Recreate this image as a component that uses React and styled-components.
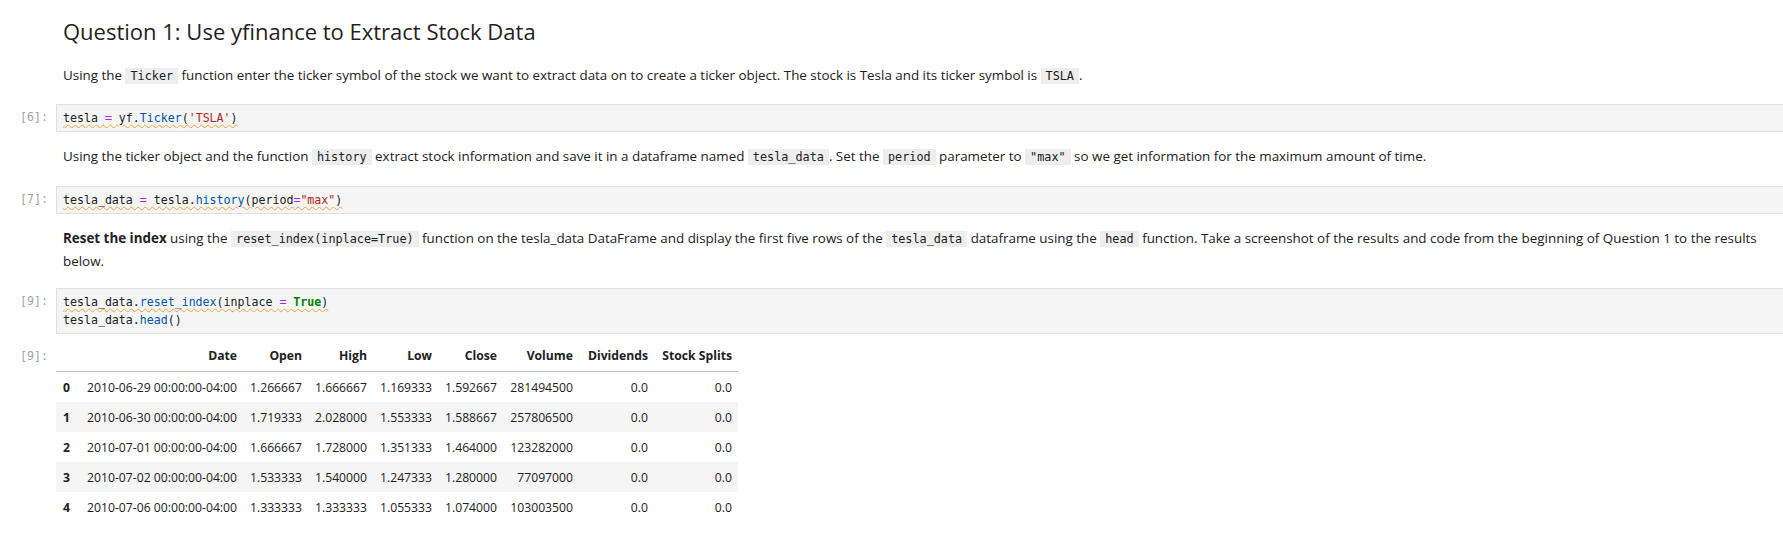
import styled, { createGlobalStyle } from "styled-components";

const GlobalStyle = createGlobalStyle`
  html, body {
    margin: 0;
    padding: 0;
    background: #ffffff;
    overflow: hidden;
  }
  body {
    font-family: "Open Sans", "Noto Sans", sans-serif;
    color: #212121;
  }
`

const Notebook = styled.div`
  display: flex;
  flex-direction: column;
  width: 1783px;
  padding-top: 16px;
`
const Row = styled.div`
  display: flex;
  flex-direction: row;
  align-items: flex-start;
  margin-top: ${(props) => props.gap || 0}px;
`
const Prompt = styled.div`
  width: 56px;
  flex: none;
  box-sizing: border-box;
  padding-right: 8px;
  padding-top: ${(props) => props.top || 5}px;
  text-align: right;
  font-family: "DejaVu Sans Mono", monospace;
  font-size: 11.6px;
  line-height: 17px;
  color: #a3a3a3;
`
const Markdown = styled.div`
  flex: 1;
  padding-left: 7px;
  font-size: 13.4px;
  line-height: 21.5px;
  color: #212121;
`
const Title = styled.h1`
  margin: 0;
  font-size: 22px;
  font-weight: 400;
  line-height: 30px;
  color: #1f1f1f;
`
const Para = styled.p`
  margin: 0;
`
const Inline = styled.code`
  font-family: "DejaVu Sans Mono", monospace;
  font-size: 11.8px;
  background: #eeeeee;
  padding: 1px 5px;
  color: #212121;
`
const CodeBox = styled.div`
  flex: 1;
  margin-right: -2px;
  background: #f5f5f5;
  border: 1px solid #e0e0e0;
  padding: 5px 6px 4px;
  font-family: "DejaVu Sans Mono", monospace;
  font-size: 11.6px;
  line-height: 17.5px;
  color: #212121;
  white-space: pre;
`
const Line = styled.div`
  span.u {
    text-decoration: underline wavy #f2a33a;
    text-decoration-thickness: 1px;
    text-underline-offset: 2px;
  }
`
const Op = styled.span`
  color: #aa22ff;
`
const Attr = styled.span`
  color: #0055aa;
`
const Str = styled.span`
  color: #ba2121;
`
const Kw = styled.span`
  color: #008000;
  font-weight: bold;
`
const Table = styled.table`
  border-collapse: collapse;
  table-layout: fixed;
  width: 682px;
  font-size: 12.2px;
  line-height: 14px;
  color: #212121;
`
const Th = styled.th`
  text-align: right;
  font-weight: 700;
  padding: 6px 6px 8px;
  white-space: nowrap;
  border-bottom: 1px solid #bdbdbd;
`
const Tr = styled.tr`
  background: ${(props) => (props.odd ? "#f5f5f5" : "transparent")};
`
const IndexCell = styled.th`
  text-align: left;
  font-weight: 700;
  padding: 9px 0 7px 7px;
`
const Td = styled.td`
  text-align: right;
  padding: 9px 6px 7px;
  white-space: nowrap;
`

const columns = ["Date", "Open", "High", "Low", "Close", "Volume", "Dividends", "Stock Splits"];
const widths = [21, 166, 65, 65, 65, 65, 76, 75, 84];

const rows = [
  ["2010-06-29 00:00:00-04:00", "1.266667", "1.666667", "1.169333", "1.592667", "281494500", "0.0", "0.0"],
  ["2010-06-30 00:00:00-04:00", "1.719333", "2.028000", "1.553333", "1.588667", "257806500", "0.0", "0.0"],
  ["2010-07-01 00:00:00-04:00", "1.666667", "1.728000", "1.351333", "1.464000", "123282000", "0.0", "0.0"],
  ["2010-07-02 00:00:00-04:00", "1.533333", "1.540000", "1.247333", "1.280000", "77097000", "0.0", "0.0"],
  ["2010-07-06 00:00:00-04:00", "1.333333", "1.333333", "1.055333", "1.074000", "103003500", "0.0", "0.0"],
];

const App = () => {
  return (
    <>
      <GlobalStyle />
      <Notebook>
        <Row>
          <Prompt />
          <Markdown>
            <Title>Question 1: Use yfinance to Extract Stock Data</Title>
          </Markdown>
        </Row>
        <Row gap={19}>
          <Prompt />
          <Markdown>
            <Para>
              Using the <Inline>Ticker</Inline> function enter the ticker symbol of the stock we want to extract data on to create a ticker object. The stock is Tesla and its ticker symbol is <Inline>TSLA</Inline>.
            </Para>
          </Markdown>
        </Row>

        <Row gap={16}>
          <Prompt>[6]:</Prompt>
          <CodeBox>
            <Line>
              <span className="u">tesla <Op>=</Op> yf.<Attr>Ticker</Attr>(<Str>'TSLA'</Str>)</span>
            </Line>
          </CodeBox>
        </Row>

        <Row gap={14}>
          <Prompt />
          <Markdown>
            <Para>
              Using the ticker object and the function <Inline>history</Inline> extract stock information and save it in a dataframe named <Inline>tesla_data</Inline>. Set the <Inline>period</Inline> parameter to <Inline>"max"</Inline> so we get information for the maximum amount of time.
            </Para>
          </Markdown>
        </Row>

        <Row gap={17}>
          <Prompt>[7]:</Prompt>
          <CodeBox>
            <Line>
              <span className="u">tesla_data <Op>=</Op> tesla.<Attr>history</Attr>(period<Op>=</Op><Str>"max"</Str>)</span>
            </Line>
          </CodeBox>
        </Row>

        <Row gap={14}>
          <Prompt />
          <Markdown>
            <Para>
              <b>Reset the index</b> using the <Inline>reset_index(inplace=True)</Inline> function on the tesla_data DataFrame and display the first five rows of the <Inline>tesla_data</Inline> dataframe using the <Inline>head</Inline> function. Take a screenshot of the results and code from the beginning of Question 1 to the results below.
            </Para>
          </Markdown>
        </Row>

        <Row gap={16}>
          <Prompt>[9]:</Prompt>
          <CodeBox>
            <Line>
              <span className="u">tesla_data.<Attr>reset_index</Attr>(inplace <Op>=</Op> <Kw>True</Kw>)</span>
            </Line>
            <Line>
              tesla_data.<Attr>head</Attr>()
            </Line>
          </CodeBox>
        </Row>

        <Row gap={9}>
          <Prompt top={5}>[9]:</Prompt>
          <Table>
            <colgroup>
              {widths.map((w, i) => <col key={i} style={{ width: w }} />)}
            </colgroup>
            <thead>
              <tr>
                <Th />
                {columns.map((c) => <Th key={c}>{c}</Th>)}
              </tr>
            </thead>
            <tbody>
              {rows.map((r, i) => (
                <Tr key={i} odd={i % 2 === 1}>
                  <IndexCell>{i}</IndexCell>
                  {r.map((v, j) => <Td key={j}>{v}</Td>)}
                </Tr>
              ))}
            </tbody>
          </Table>
        </Row>
      </Notebook>
    </>
  );
}

export default App;
